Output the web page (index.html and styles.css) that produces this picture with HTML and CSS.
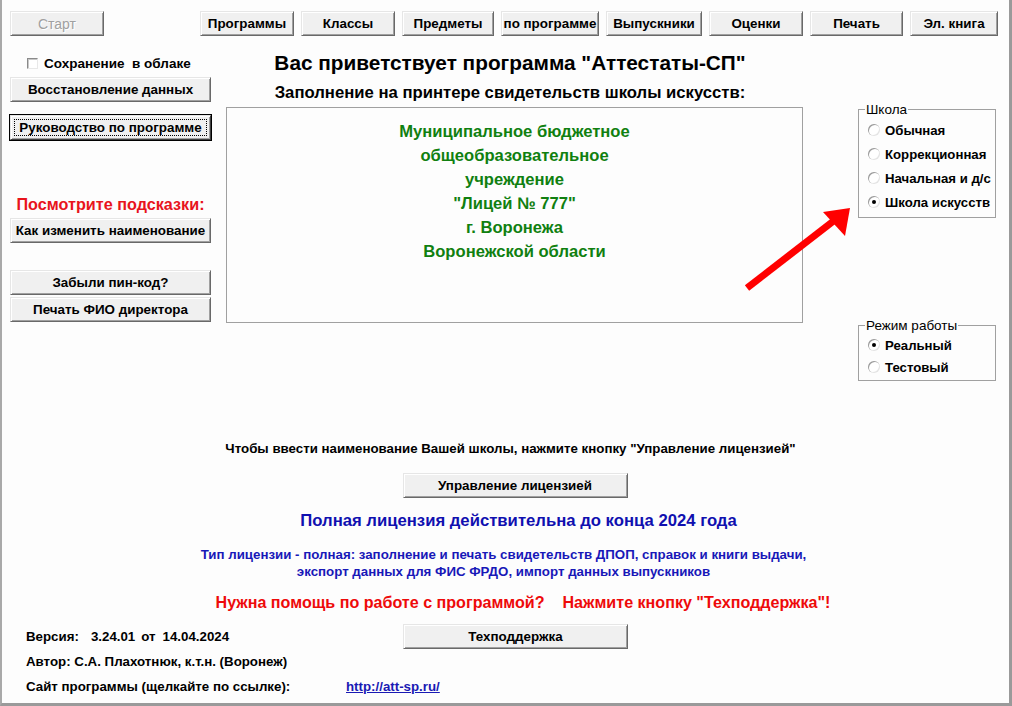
FILE: index.html
```html
<!DOCTYPE html>
<html lang="ru">
<head>
<meta charset="utf-8">
<title>Аттестаты-СП</title>
<link rel="stylesheet" href="styles.css">
</head>
<body>
<div class="window">
  <div class="toolbar">
    <button class="btn start" disabled>Старт</button>
    <div class="tabs">
      <button class="btn t1">Программы</button>
      <button class="btn t2">Классы</button>
      <button class="btn t3">Предметы</button>
      <button class="btn t4">по программе</button>
      <button class="btn t5">Выпускники</button>
      <button class="btn t6">Оценки</button>
      <button class="btn t7">Печать</button>
      <button class="btn t8">Эл. книга</button>
    </div>
  </div>

  <div class="upper">
    <div class="left">
      <label class="check-row"><span class="checkbox"></span><span>Сохранение&nbsp; в облаке</span></label>
      <button class="btn wide restore">Восстановление данных</button>
      <button class="btn wide default guide"><span class="focus">Руководство по программе</span></button>
      <div class="tips">Посмотрите подсказки:</div>
      <button class="btn wide rename">Как изменить наименование</button>
      <button class="btn wide pin">Забыли пин-код?</button>
      <button class="btn wide director">Печать ФИО директора</button>
    </div>

    <div class="center">
      <h1 class="title">Вас приветствует программа "Аттестаты-СП"</h1>
      <h2 class="subtitle">Заполнение на принтере свидетельств школы искусств:</h2>
      <div class="school-box">
        <div>Муниципальное бюджетное</div>
        <div>общеобразовательное</div>
        <div>учреждение</div>
        <div>"Лицей № 777"</div>
        <div>г. Воронежа</div>
        <div>Воронежской области</div>
      </div>
    </div>

    <div class="right">
      <fieldset class="group school">
        <legend>Школа</legend>
        <div class="radio-row"><span class="radio"></span>Обычная</div>
        <div class="radio-row"><span class="radio"></span>Коррекционная</div>
        <div class="radio-row"><span class="radio"></span>Начальная и д/с</div>
        <div class="radio-row"><span class="radio checked"></span>Школа искусств</div>
      </fieldset>
      <fieldset class="group mode">
        <legend>Режим работы</legend>
        <div class="radio-row"><span class="radio checked"></span>Реальный</div>
        <div class="radio-row"><span class="radio"></span>Тестовый</div>
      </fieldset>
    </div>
  </div>

  <div class="lower">
    <div class="hint">Чтобы ввести наименование Вашей школы, нажмите кнопку "Управление лицензией"</div>
    <button class="btn license">Управление лицензией</button>
    <div class="full">Полная лицензия действительна до конца 2024 года</div>
    <div class="type">Тип лицензии - полная: заполнение и печать свидетельств ДПОП, справок и книги выдачи,<br>экспорт данных для ФИС ФРДО, импорт данных выпускников</div>
    <div class="help">Нужна помощь по работе с программой?    Нажмите кнопку "Техподдержка"!</div>
  </div>

  <div class="footer">
    <div class="info"><span>Версия:</span><span class="ver">3.24.01</span><span class="ot">от</span><span>14.04.2024</span></div>
    <div class="cell"><button class="btn license">Техподдержка</button></div>
    <div class="info">Автор: С.А. Плахотнюк, к.т.н. (Воронеж)</div>
    <div class="cell"></div>
    <div class="info">Сайт программы (щелкайте по ссылке):</div>
    <div class="cell"><a class="link" href="#">http://att-sp.ru/</a></div>
  </div>

  <svg class="arrow" width="120" height="100" viewBox="0 0 120 100">
    <line x1="7" y1="88" x2="100" y2="16" stroke="#ff0000" stroke-width="7"/>
    <polygon points="110,8 83,12 105,36" fill="#ff0000"/>
  </svg>
</div>
</body>
</html>
```

FILE: styles.css
```css
* { box-sizing: border-box; }

html, body {
  margin: 0;
  padding: 0;
  background: #fdfdfd;
}

body {
  font-family: "Liberation Sans", Arial, sans-serif;
  font-size: 13px;
  color: #000;
}

.window {
  position: relative;
  width: 1012px;
  height: 706px;
  background: #fdfdfd;
  border-left: 2px solid #a9a9a9;
  border-right: 3px solid #9a9a9a;
  border-bottom: 3px solid #9a9a9a;
  overflow: hidden;
}

/* ---------- buttons ---------- */
.btn {
  font-family: "Liberation Sans", Arial, sans-serif;
  font-size: 13.4px;
  font-weight: bold;
  color: #000;
  height: 25px;
  padding: 0;
  margin: 0;
  background: #f0f0f0;
  border-top: 1px solid #e6e6e6;
  border-left: 1px solid #e6e6e6;
  border-right: 1px solid #696969;
  border-bottom: 1px solid #696969;
  box-shadow: inset 1px 1px #ffffff, inset -1px -1px #a0a0a0;
  display: flex;
  align-items: center;
  justify-content: center;
  white-space: nowrap;
}

.btn.start {
  width: 94px;
  color: #a0a0a0;
  text-shadow: 1px 1px #ffffff;
  font-weight: normal;
  font-size: 14px;
}

.btn.default {
  outline: 1px solid #000;
  border-color: #e6e6e6 #404040 #404040 #e6e6e6;
}

.btn .focus {
  display: flex;
  align-items: center;
  justify-content: center;
  width: calc(100% - 6px);
  height: calc(100% - 6px);
  border: 1px dotted #000;
}

/* ---------- toolbar ---------- */
.toolbar {
  display: flex;
  padding: 11px 0 0 8px;
}

.tabs {
  display: flex;
  gap: 7px;
  margin-left: 96px;
}

.t1, .t2 { width: 94px; }
.t3 { width: 92px; }
.t4 { width: 98px; }
.t5 { width: 96px; }
.t6 { width: 94px; }
.t7 { width: 93px; }
.t8 { width: 88px; }

/* ---------- upper grid ---------- */
.upper {
  display: grid;
  grid-template-columns: 201px 577px 138px;
  column-gap: 15px;
  padding-left: 8px;
}

.right { margin-left: 40px; }

.left {
  display: flex;
  flex-direction: column;
}

.btn.wide { width: 201px; }

.check-row {
  display: flex;
  align-items: center;
  height: 16px;
  margin-top: 19px;
  padding-left: 17px;
  font-size: 13.5px;
  font-weight: bold;
  gap: 6px;
}

.checkbox {
  width: 11px;
  height: 11px;
  background: #fff;
  border: 1px solid;
  border-color: #8a8a8a #e8e8e8 #e8e8e8 #8a8a8a;
  box-shadow: inset 1px 1px #c8c8c8;
}

.restore { margin-top: 6px; }
.guide { margin-top: 13px; }

.tips {
  margin-top: 54px;
  color: #e8141c;
  font-size: 16.2px;
  font-weight: bold;
  line-height: 20px;
  text-align: center;
}

.rename { margin-top: 4px; }
.pin { margin-top: 27px; }
.director { margin-top: 2px; }

/* ---------- center ---------- */
.center {
  display: flex;
  flex-direction: column;
  align-items: center;
}

.title {
  margin: 15px 0 0;
  padding-right: 9px;
  font-size: 20.8px;
  line-height: 24px;
  font-weight: bold;
}

.subtitle {
  margin: 8px 0 0;
  padding-right: 9px;
  font-size: 16.7px;
  line-height: 20px;
  font-weight: bold;
}

.school-box {
  margin-top: 4px;
  width: 577px;
  height: 216px;
  border: 1px solid #a0a0a0;
  padding-top: 12px;
  text-align: center;
  color: #108010;
  font-size: 16.6px;
  font-weight: bold;
  line-height: 24px;
}

/* ---------- right groups ---------- */
.group {
  margin: 0;
  border: 1px solid #a0a0a0;
  padding: 1px 0 3px 9px;
  width: 138px;
}

.group legend {
  padding: 0 1px;
  margin-left: -3px;
  font-size: 13.5px;
  line-height: 15px;
}

.school { margin-top: 66px; }
.mode { margin-top: 100px; }

.radio-row {
  display: flex;
  align-items: center;
  height: 24px;
  gap: 5px;
  font-size: 13.2px;
  font-weight: bold;
  white-space: nowrap;
}

.mode .radio-row { height: 22px; }
.mode { padding-bottom: 2px; }

.radio {
  position: relative;
  width: 12px;
  height: 12px;
  border-radius: 50%;
  background: #fff;
  box-shadow: inset 1px 1px #9a9a9a, inset -1px -1px #e4e4e4;
  flex: none;
}

.radio.checked::after {
  content: "";
  position: absolute;
  left: 4px;
  top: 4px;
  width: 4px;
  height: 4px;
  border-radius: 50%;
  background: #000;
}

/* ---------- lower ---------- */
.lower {
  display: flex;
  flex-direction: column;
  align-items: center;
  margin-top: 60px;
}

.hint {
  font-size: 13.3px;
  font-weight: bold;
  line-height: 16px;
  padding-left: 10px;
}

.btn.license { width: 225px; }

.lower .license {
  margin-top: 16px;
  margin-left: 19px;
}

.full {
  margin-top: 13px;
  color: #1010b0;
  font-size: 16.7px;
  font-weight: bold;
  line-height: 20px;
  padding-left: 26px;
}

.type {
  margin-top: 15px;
  padding-right: 4px;
  color: #1818b8;
  font-size: 13.3px;
  font-weight: bold;
  line-height: 17px;
  text-align: center;
}

.help {
  margin-top: 12px;
  color: #ee0a0a;
  font-size: 16.1px;
  font-weight: bold;
  line-height: 20px;
  white-space: pre;
  padding-left: 35px;
}

/* ---------- footer ---------- */
.footer {
  display: grid;
  grid-template-columns: 320px auto;
  grid-auto-rows: 25px;
  margin-top: 12px;
  padding-left: 24px;
}

.info {
  display: flex;
  align-items: center;
  font-size: 13.3px;
  font-weight: bold;
}

.ver { margin-left: 12px; }
.ot { margin-left: 6px; margin-right: 7px; }

.cell {
  display: flex;
  align-items: center;
}

.footer .license { margin-left: 57px; }

.link {
  color: #1a1ab4;
  font-size: 13.3px;
  font-weight: bold;
  text-decoration: underline;
}

/* ---------- overlay arrow ---------- */
.arrow {
  position: absolute;
  left: 738px;
  top: 200px;
}
```
